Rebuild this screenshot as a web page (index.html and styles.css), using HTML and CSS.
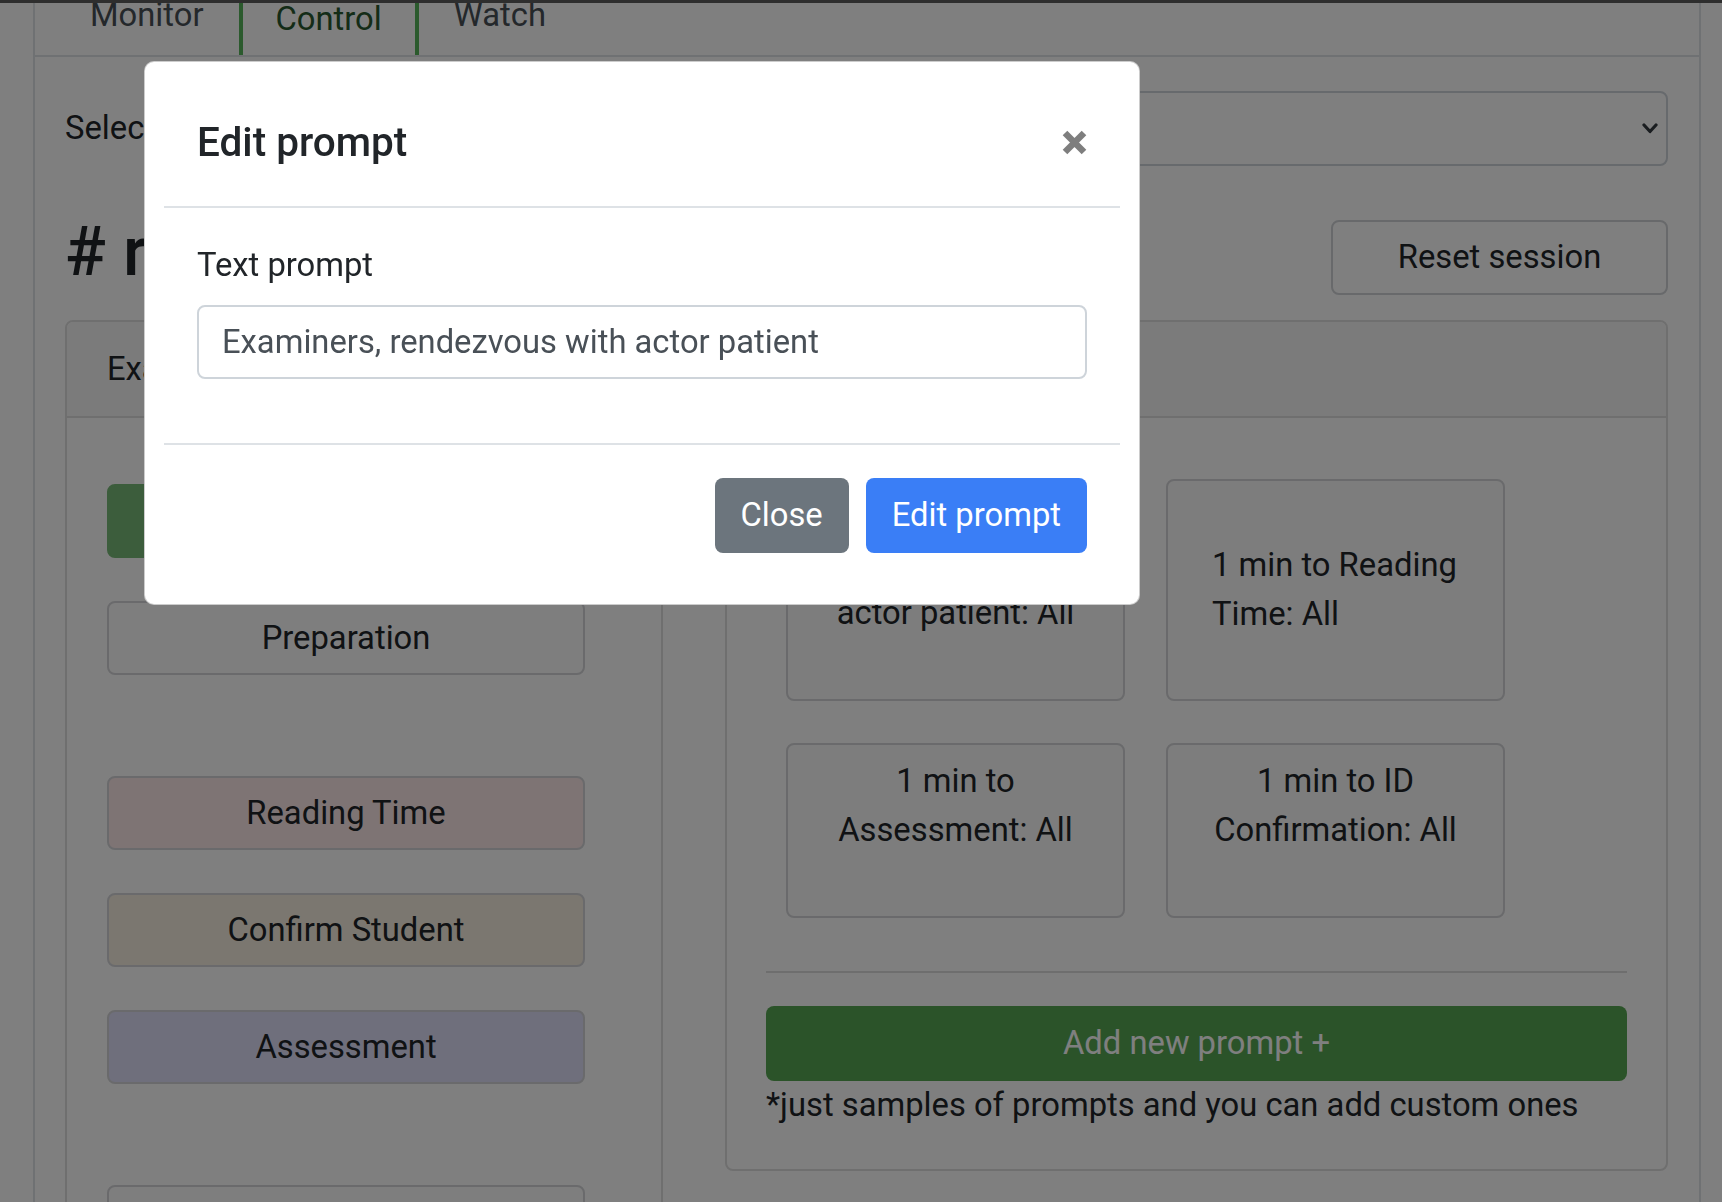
FILE: index.html
```html
<!DOCTYPE html>
<html lang="en">
<head>
<meta charset="utf-8">
<title>Control – Edit prompt</title>
<link rel="stylesheet" href="styles.css">
</head>
<body>
<div class="topbar"></div>
<div class="panel">
  <nav class="tabs">
    <a class="tab" href="#">Monitor</a>
    <a class="tab tab--active" href="#">Control</a>
    <a class="tab" href="#">Watch</a>
  </nav>
  <div class="panel-body">
    <div class="select-row">
      <label class="select-label">Select session:</label>
      <div class="select-box">
        <span class="select-value">room-1</span>
        <svg class="chevron" width="16" height="11" viewBox="0 0 16 11"><path d="M2 2 L8 8.5 L14 2" fill="none" stroke="#343a40" stroke-width="3.2" stroke-linecap="round" stroke-linejoin="round"/></svg>
      </div>
    </div>
    <div class="title-row">
      <h2 class="room-title"># room-1</h2>
      <button class="btn-reset">Reset session</button>
    </div>
    <div class="columns">
      <section class="card card--phases">
        <div class="card-header">Examination phases</div>
        <div class="phase-body">
          <div class="phase-group">
            <button class="phase phase--current">Start</button>
            <button class="phase">Preparation</button>
          </div>
          <div class="phase-group">
            <button class="phase phase--reading">Reading Time</button>
            <button class="phase phase--confirm">Confirm Student</button>
            <button class="phase phase--assessment">Assessment</button>
          </div>
          <div class="phase-group">
            <button class="phase">Finish</button>
          </div>
        </div>
      </section>
      <section class="card card--prompts">
        <div class="card-header">Prompts</div>
        <div class="prompt-body">
          <div class="prompt-grid">
            <div class="prompt-tile">Examiners, rendezvous with actor patient: All</div>
            <div class="prompt-tile prompt-tile--middle">1 min to Reading Time: All</div>
            <div class="prompt-tile prompt-tile--low">1 min to Assessment: All</div>
            <div class="prompt-tile prompt-tile--low">1 min to ID Confirmation: All</div>
          </div>
          <hr class="divider">
          <button class="btn-add">Add new prompt +</button>
          <p class="hint">*just samples of prompts and you can add custom ones</p>
        </div>
      </section>
    </div>
  </div>
</div>

<div class="backdrop"></div>
<div class="modal" role="dialog" aria-labelledby="modal-title">
  <div class="modal-header">
    <h5 class="modal-title" id="modal-title">Edit prompt</h5>
    <button class="modal-close" aria-label="Close">
      <svg width="25" height="25" viewBox="0 0 25 25"><path d="M3 3 L22 22 M22 3 L3 22" stroke="#000" stroke-width="6.5" fill="none"/></svg>
    </button>
  </div>
  <div class="modal-body">
    <label class="field-label" for="prompt-text">Text prompt</label>
    <input class="text-input" id="prompt-text" type="text" value="Examiners, rendezvous with actor patient">
  </div>
  <div class="modal-footer">
    <button class="btn btn--secondary">Close</button>
    <button class="btn btn--primary">Edit prompt</button>
  </div>
</div>
</body>
</html>
```
FILE: styles.css
```css
* { box-sizing: border-box; }

html, body {
  margin: 0;
  height: 100%;
}

body {
  font-family: Roboto, "Liberation Sans", Arial, sans-serif;
  font-size: 32.75px;
  line-height: 49px;
  color: #212529;
  background: #fff;
  overflow: hidden;
}

button, input {
  font: inherit;
}

.topbar {
  position: fixed;
  top: 0;
  left: 0;
  right: 0;
  height: 3px;
  background: #2e2e2e;
  z-index: 30;
}

.panel {
  margin: 0 21px 0 33px;
  border-left: 2px solid #dee2e6;
  border-right: 2px solid #dee2e6;
  min-height: 100%;
}

/* tabs */
.tabs {
  display: flex;
  height: 57px;
  padding-left: 20px;
  border-bottom: 2px solid #dee2e6;
}

.tab {
  display: block;
  margin-top: -4px;
  padding: 2px 35px 0;
  line-height: 34px;
  color: #495057;
  text-decoration: none;
}

.tab--active {
  padding: 6px 33px 0;
  border-left: 4px solid #56b45a;
  border-right: 4px solid #56b45a;
  color: #28582f;
}

.panel-body {
  padding: 34px 31px 0 30px;
}

/* select */
.select-row {
  display: flex;
  align-items: center;
  gap: 20px;
}

.select-label {
  white-space: nowrap;
}

.select-box {
  flex: 1;
  height: 75px;
  border: 2px solid #ced4da;
  border-radius: 8px;
  display: flex;
  align-items: center;
  justify-content: space-between;
  padding: 0 8px 0 24px;
  color: #495057;
}

/* title */
.title-row {
  display: flex;
  justify-content: space-between;
  align-items: flex-start;
  margin-top: 54px;
}

.room-title {
  margin: -5px 0 0;
  font-size: 68px;
  line-height: 75px;
  font-weight: 500;
}

.btn-reset {
  width: 337px;
  height: 75px;
  border: 2px solid #d0d3d6;
  border-radius: 8px;
  background: transparent;
  color: #212529;
}

/* columns */
.columns {
  display: flex;
  align-items: flex-start;
  gap: 62px;
  margin-top: 25px;
}

.card {
  border: 2px solid #dedede;
  border-radius: 8px;
  background: #fff;
}

.card--phases {
  width: 598px;
  flex: none;
}

.card--prompts {
  flex: 1;
}

.card-header {
  height: 96px;
  display: flex;
  align-items: center;
  padding: 0 40px;
  background: #f7f7f7;
  border-bottom: 2px solid #dedede;
  border-radius: 6px 6px 0 0;
}

/* phases */
.phase-body {
  padding: 66px 0 41px 40px;
  display: flex;
  flex-direction: column;
  gap: 101px;
}

.phase-group {
  display: flex;
  flex-direction: column;
  gap: 43px;
}

.phase {
  width: 478px;
  height: 74px;
  border: 2px solid #d4d5d8;
  border-radius: 8px;
  background: #fcfcfc;
  color: #212529;
  padding: 0;
}

.phase--current {
  background: #78ba78;
  border-color: #78ba78;
  color: #fff;
}

.phase--reading { background: #fce8e8; }
.phase--confirm { background: #f6eee0; }
.phase--assessment { background: #dedef8; }

/* prompts */
.prompt-body {
  padding: 41px 39px 39px;
}

.prompt-grid {
  display: grid;
  grid-template-columns: repeat(2, 339px);
  grid-template-rows: 222px 175px;
  gap: 42px 41px;
  padding: 20px;
}

.prompt-tile {
  border: 2px solid #d4d5d8;
  border-radius: 8px;
  background: #fafafa;
  padding: 10px 36px;
  text-align: center;
}

.prompt-tile--middle {
  display: flex;
  align-items: center;
  text-align: left;
  padding: 0 40px 0 44px;
}

.prompt-tile--low {
  padding-top: 12px;
}

.divider {
  margin: 33px 0;
  border: 0;
  border-top: 2px solid #dcdcdc;
}

.btn-add {
  display: block;
  width: 100%;
  height: 75px;
  border: 0;
  border-radius: 8px;
  background: #56a652;
  color: #fff;
}

.hint {
  margin: 0;
}

/* modal */
.backdrop {
  position: fixed;
  inset: 0;
  background: rgba(0, 0, 0, 0.5);
  z-index: 10;
}

.modal {
  position: fixed;
  left: 144px;
  top: 61px;
  width: 996px;
  padding: 16px 19px 18px;
  background: #fff;
  border: 1px solid rgba(0, 0, 0, 0.2);
  border-radius: 10px;
  z-index: 20;
}

.modal-header {
  display: flex;
  align-items: center;
  justify-content: space-between;
  padding: 33px;
  border-bottom: 2px solid #dee2e6;
}

.modal-title {
  margin: 0;
  font-size: 40.5px;
  line-height: 62px;
  font-weight: 500;
}

.modal-close {
  width: 25px;
  height: 25px;
  padding: 0;
  border: 0;
  background: none;
  opacity: 0.5;
  display: flex;
}

.modal-body {
  padding: 33px 33px 31px;
}

.field-label {
  display: block;
  margin-bottom: 15px;
}

.text-input {
  display: block;
  width: 100%;
  height: 74px;
  margin-bottom: 33px;
  padding: 0 23px;
  border: 2px solid #ced4da;
  border-radius: 8px;
  color: #495057;
}

.modal-footer {
  display: flex;
  justify-content: flex-end;
  gap: 17px;
  padding: 33px;
  border-top: 2px solid #dee2e6;
}

.btn {
  height: 75px;
  padding: 0 26px;
  border: 0;
  border-radius: 8px;
  color: #fff;
}

.btn--secondary { background: #6c757d; }
.btn--primary { background: #3a7ef6; }
```
